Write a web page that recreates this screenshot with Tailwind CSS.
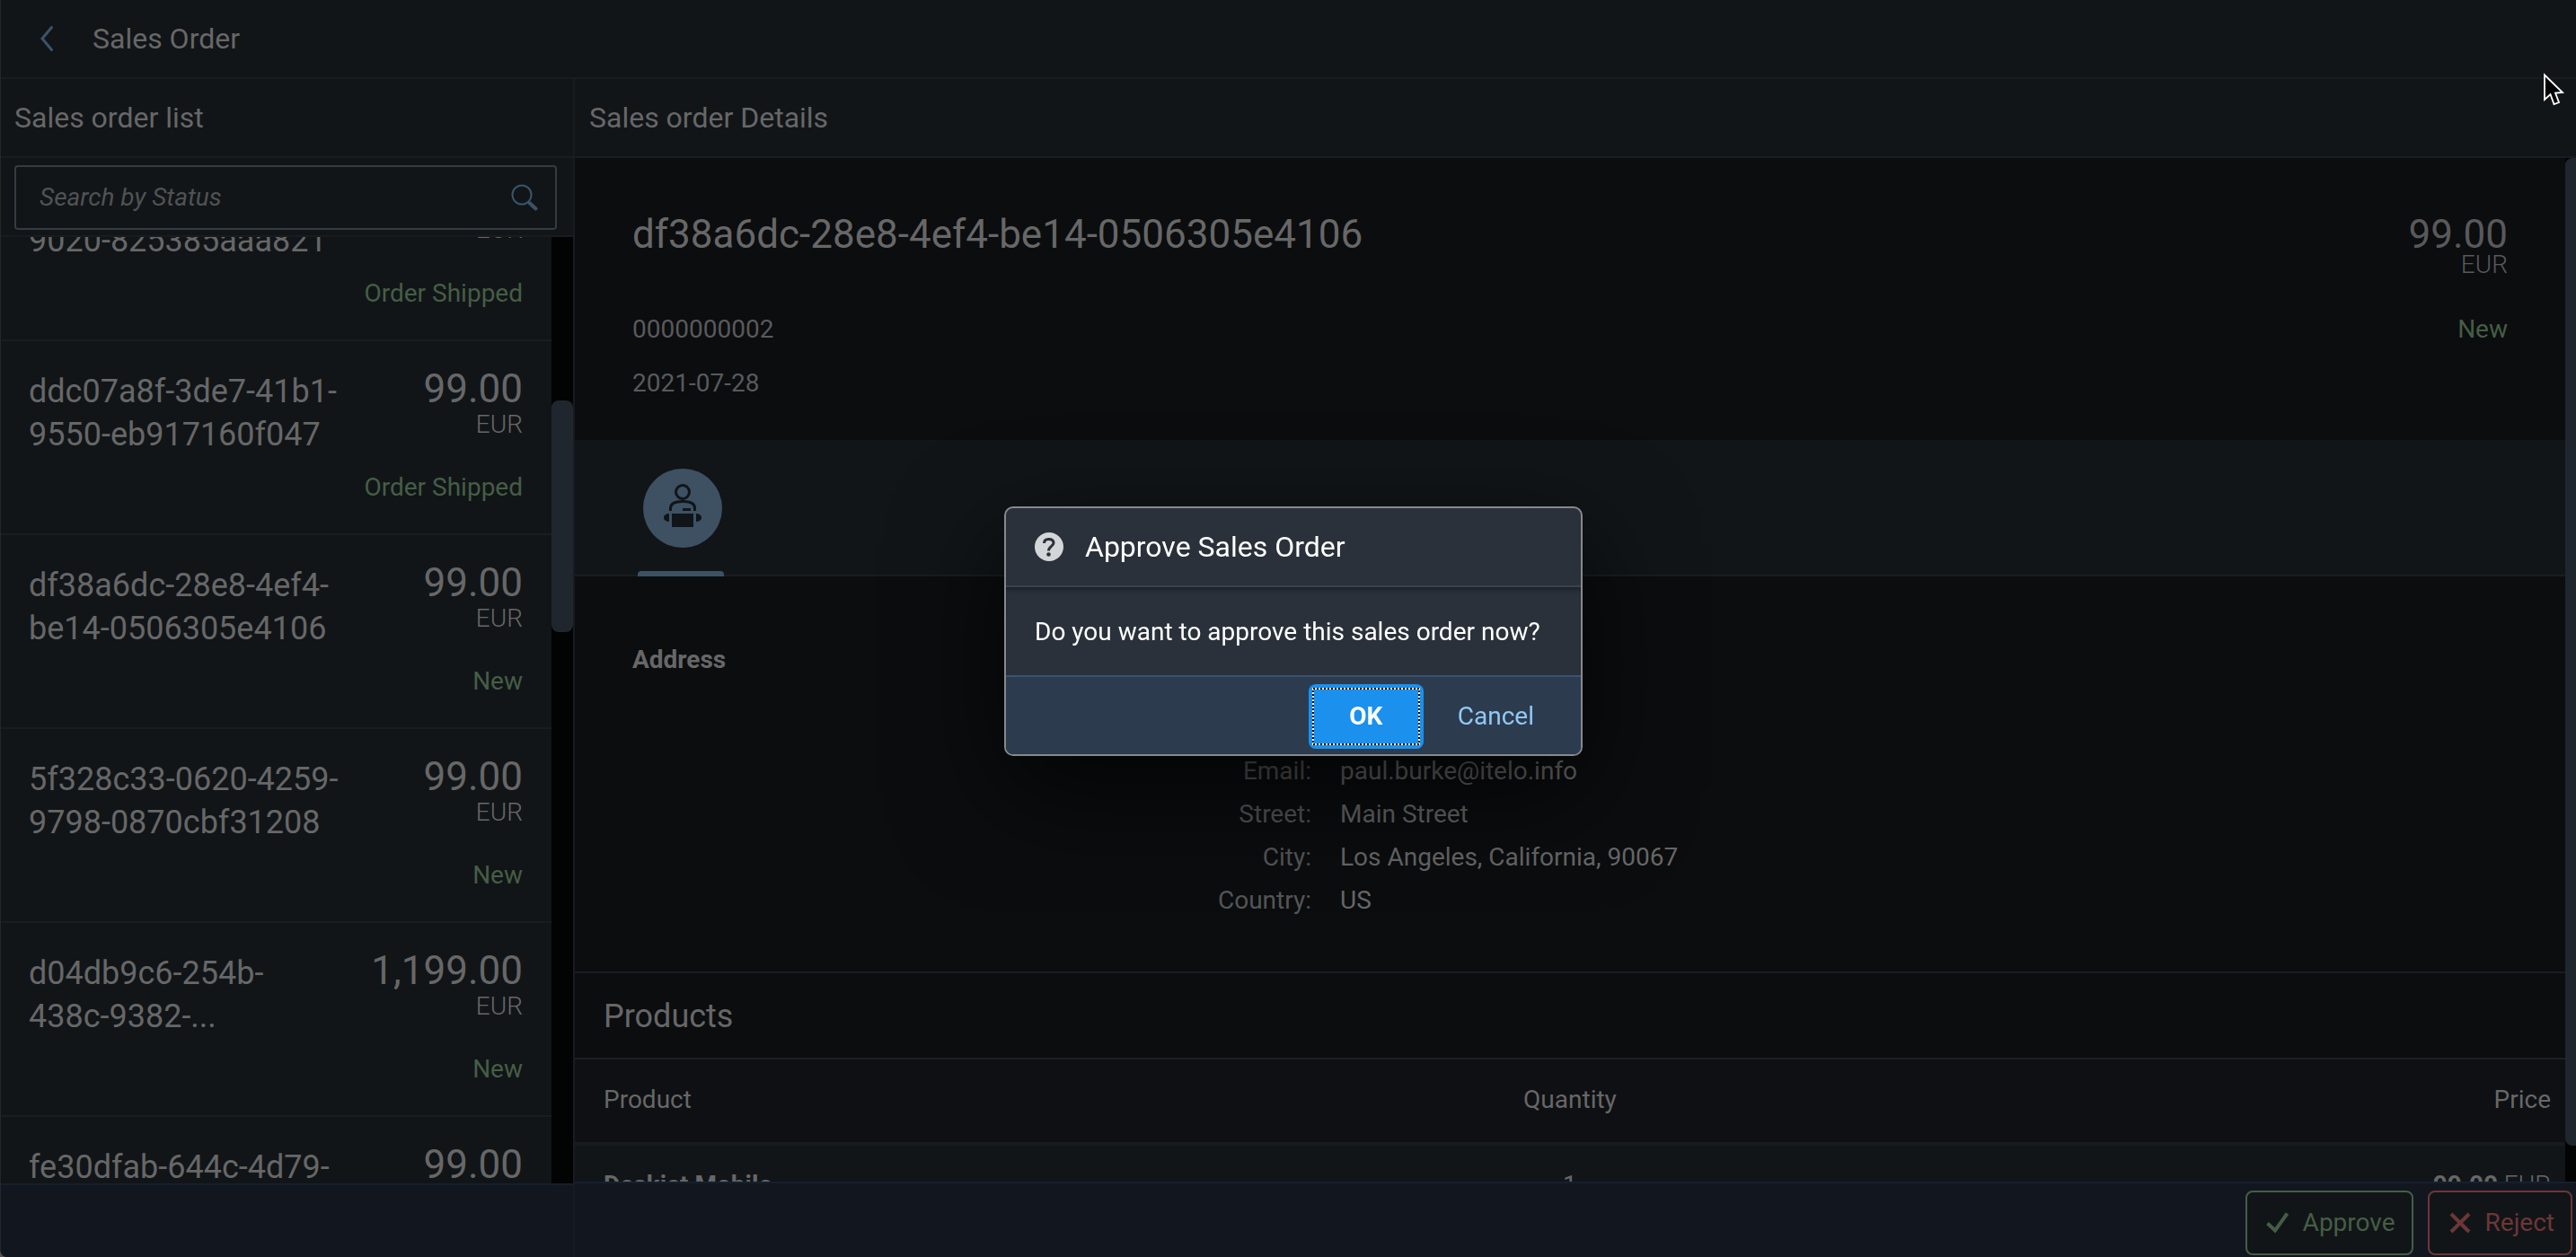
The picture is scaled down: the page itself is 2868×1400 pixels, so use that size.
<!DOCTYPE html>
<html lang="en">
<head>
<meta charset="utf-8">
<title>Sales Order</title>
<script src="https://cdn.jsdelivr.net/npm/@tailwindcss/browser@4"></script>
</head>
<body class="h-screen overflow-hidden bg-[#55524e] font-[Roboto,sans-serif] text-[28px] leading-9 text-[#676767]">
<div class="flex h-full flex-col overflow-hidden rounded-bl-lg border-l border-[#23272a] bg-[#111518]">

  <!-- Application header -->
  <header class="flex h-22 shrink-0 items-center border-b-2 border-[#181c21] pl-[34px]">
    <button type="button" aria-label="Back" class="flex h-8 w-8 items-center justify-center text-[#3b5368]">
      <svg class="h-8 w-8" viewBox="0 0 32 32" fill="none" stroke="currentColor" stroke-width="3" stroke-linecap="round"><path d="M22.5 3.500 L12 16 L22.500 28.500"/></svg>
    </button>
    <h1 class="ml-9 text-[32px]">Sales Order</h1>
  </header>

  <div class="flex min-h-0 flex-1">

    <!-- Master list -->
    <aside class="flex w-[639px] shrink-0 flex-col border-r-2 border-[#181b21]">
      <h2 class="flex h-22 shrink-0 items-center border-b-2 border-[#181c24] pl-[15px] text-[32px]">Sales order list</h2>
      <div class="shrink-0 border-b-2 border-[#181c21] pt-2 pr-[18px] pb-1.5 pl-[15px]">
        <div class="flex h-18 items-center rounded border-2 border-[#343b43] pr-[18px] pl-[26px]">
          <input type="search" aria-label="Search by Status" placeholder="Search by Status" class="min-w-0 flex-1 bg-transparent italic outline-none placeholder:text-[#505253]">
          <button type="button" aria-label="Search" class="text-[#3b5368]">
            <svg class="h-8 w-8" viewBox="0 0 32 32" fill="none" stroke="currentColor" stroke-linecap="round"><circle cx="13" cy="13" r="10.500" stroke-width="2"/><path d="M21.500 22 L28.500 28.500" stroke-width="4"/></svg>
          </button>
        </div>
      </div>
      <div class="flex min-h-0 flex-1 overflow-hidden">
        <ul class="-mt-[100px] min-w-0 flex-1">
          <li class="border-b-2 border-[#191d20] pt-8 pr-8 pb-[33px] pl-[31px]">
            <div class="flex h-24 items-end justify-between">
              <p class="text-4xl leading-[48px]">9020-825385aaa821</p>
              <p class="mb-[18px] font-light">EUR</p>
            </div>
            <p class="mt-[17px] text-right text-[#465d45]">Order Shipped</p>
          </li>
          <li class="border-b-2 border-[#191d20] pt-8 pr-8 pb-[33px] pl-[31px]">
            <div class="flex h-24 justify-between">
              <p class="text-4xl leading-[48px]">ddc07a8f-3de7-41b1-<br>9550-eb917160f047</p>
              <p class="text-right leading-[38px] font-light"><span class="block text-[44px] leading-[42px] font-normal">99.00</span>EUR</p>
            </div>
            <p class="mt-[17px] text-right text-[#465d45]">Order Shipped</p>
          </li>
          <li class="border-b-2 border-[#191d20] pt-8 pr-8 pb-[33px] pl-[31px]">
            <div class="flex h-24 justify-between">
              <p class="text-4xl leading-[48px]">df38a6dc-28e8-4ef4-<br>be14-0506305e4106</p>
              <p class="text-right leading-[38px] font-light"><span class="block text-[44px] leading-[42px] font-normal">99.00</span>EUR</p>
            </div>
            <p class="mt-[17px] text-right text-[#465d45]">New</p>
          </li>
          <li class="border-b-2 border-[#191d20] pt-8 pr-8 pb-[33px] pl-[31px]">
            <div class="flex h-24 justify-between">
              <p class="text-4xl leading-[48px]">5f328c33-0620-4259-<br>9798-0870cbf31208</p>
              <p class="text-right leading-[38px] font-light"><span class="block text-[44px] leading-[42px] font-normal">99.00</span>EUR</p>
            </div>
            <p class="mt-[17px] text-right text-[#465d45]">New</p>
          </li>
          <li class="border-b-2 border-[#191d20] pt-8 pr-8 pb-[33px] pl-[31px]">
            <div class="flex h-24 justify-between">
              <p class="text-4xl leading-[48px]">d04db9c6-254b-<br>438c-9382-...</p>
              <p class="text-right leading-[38px] font-light"><span class="block text-[44px] leading-[42px] font-normal">1,199.00</span>EUR</p>
            </div>
            <p class="mt-[17px] text-right text-[#465d45]">New</p>
          </li>
          <li class="pt-8 pr-8 pl-[31px]">
            <div class="flex justify-between">
              <p class="text-4xl leading-[48px]">fe30dfab-644c-4d79-</p>
              <p class="text-right text-[44px] leading-[42px]">99.00</p>
            </div>
          </li>
        </ul>
        <div class="w-6 shrink-0 bg-[#020303] pt-[182px]"><div class="h-[258px] rounded-lg bg-[#1f262e]"></div></div>
      </div>
      <div class="h-[82px] shrink-0 border-t-2 border-[#15202d] bg-[#12171f]"></div>
    </aside>

    <!-- Detail page -->
    <main class="flex min-w-0 flex-1 flex-col">
      <h2 class="flex h-22 shrink-0 items-center border-b-2 border-[#181c24] pl-4 text-[32px]">Sales order Details</h2>
      <div class="flex min-h-0 flex-1 overflow-hidden">
        <div class="min-w-0 flex-1 bg-[#0b0d0f]">
          <section class="px-16 pt-16 pb-[33px]">
            <div class="flex h-[66px] justify-between">
              <h3 class="text-[44px] leading-[42px]">df38a6dc-28e8-4ef4-be14-0506305e4106</h3>
              <p class="text-right leading-[26px] font-light text-[#59595a]"><span class="block text-[44px] leading-[42px] font-normal">99.00</span>EUR</p>
            </div>
            <div class="mt-[31px] flex justify-between leading-[60px] text-[#595a5b]">
              <p>0000000002<br>2021-07-28</p>
              <p class="text-[#465d45]">New</p>
            </div>
          </section>

          <div role="tablist" class="flex h-[152px] items-end border-b-2 border-[#191d22] bg-[#111518] pl-[70px]">
            <button type="button" role="tab" aria-selected="true" aria-label="Customer" class="-mb-0.5 flex w-24 flex-col items-center">
              <svg class="ml-1 h-22 w-22" viewBox="716 522 88 88"><circle cx="760" cy="566" r="44" fill="#3d5163"/><g fill="none" stroke="#111518" stroke-width="3"><circle cx="760" cy="548" r="7.500"/><path d="M746.500 569 V566 C746.500 561 750.500 558.500 760 558.500 C769.500 558.500 773.500 561 773.500 566 V569"/></g><g fill="#111518"><path d="M760 566 H769 V569 H760 Z M748 572 H772 V587 H748 Z M745 572 V581 C737 581 737 572 745 572 Z M775 572 V581 C783 581 783 572 775 572 Z"/></g></svg>
              <span class="mt-[26px] h-1.5 w-full rounded-t bg-[#3d5163]"></span>
            </button>
          </div>

          <section class="h-[442px] border-b-2 border-[#191d23] px-16 pt-[75px]">
            <h4 class="font-bold">Address</h4>
            <dl class="mt-[82px] grid grid-cols-[7fr_12fr] gap-x-8 pr-1 leading-[48px]">
              <dt class="text-right text-[#555657]">Email:</dt><dd>paul.burke@itelo.info</dd>
              <dt class="text-right text-[#555657]">Street:</dt><dd>Main Street</dd>
              <dt class="text-right text-[#555657]">City:</dt><dd>Los Angeles, California, 90067</dd>
              <dt class="text-right text-[#555657]">Country:</dt><dd>US</dd>
            </dl>
          </section>

          <section>
            <h3 id="products" class="flex h-24 items-center border-b-2 border-[#1b2026] pt-0.5 pl-8 text-4xl">Products</h3>
            <table aria-labelledby="products" class="w-full table-fixed">
              <thead class="bg-[#0e1013]">
                <tr class="h-[94px] border-b-4 border-[#171b20]">
                  <th scope="col" class="pb-0.5 pl-8 text-left font-normal">Product</th>
                  <th scope="col" class="pb-0.5 text-center font-normal">Quantity</th>
                  <th scope="col" class="pr-4 pb-0.5 text-right font-normal">Price</th>
                </tr>
              </thead>
              <tbody class="bg-[#111518]">
                <tr class="align-top">
                  <td class="pt-[26px] pb-8 pl-8 font-bold">Deskjet Mobile</td>
                  <td class="pt-[26px] pb-8 text-center">1</td>
                  <td class="pt-[26px] pr-4 pb-8 text-right font-light"><b class="font-bold">99.00</b> EUR</td>
                </tr>
              </tbody>
            </table>
          </section>
        </div>
        <div class="w-3 shrink-0 bg-[#020303]"><div class="h-[1100px] rounded-l-lg bg-[#1f262e]"></div></div>
      </div>

      <footer class="flex h-[84px] shrink-0 items-center justify-end gap-4 border-t-2 border-[#16202d] bg-[#12171f] pt-1.5 pr-1">
        <button type="button" class="flex h-18 items-center gap-3.5 rounded-lg border-2 border-[#465d45] bg-[#111518] pr-[18px] pl-5 text-[#465d45]">
          <svg class="h-7 w-7" viewBox="0 0 28 28" fill="none" stroke="currentColor" stroke-width="4"><path d="M2.500 14.500 L11 22.500 L24.500 3.500"/></svg>Approve
        </button>
        <button type="button" class="flex h-18 items-center gap-3.5 rounded-lg border-2 border-[#6c3736] bg-[#111518] pr-[18px] pl-5 text-[#6c3736]">
          <svg class="h-7 w-7" viewBox="0 0 28 28" fill="none" stroke="currentColor" stroke-width="4"><path d="M4 4 L24 24 M24 4 L4 24"/></svg>Reject
        </button>
      </footer>
    </main>
  </div>
</div>

<!-- Confirmation dialog -->
<div class="fixed inset-0 flex items-center justify-center pt-1.5 pl-3">
  <div role="dialog" aria-modal="true" aria-labelledby="dlg-title" class="w-[644px] overflow-hidden rounded-[10px] border-2 border-[#87898a] bg-[#2a313a] text-white shadow-[0_40px_120px_rgba(0,0,0,0.7)]">
    <div class="flex h-22 items-center gap-6 border-b-2 border-[#3a444f] pl-8">
      <svg class="h-8 w-8" viewBox="0 0 32 32"><circle cx="16" cy="16" r="16" fill="#d3d6d9"/><path d="M10.500 12 C10.500 9 12.500 7.500 15.500 7.500 C19 7.500 21 9.200 21 11.800 C21 15.500 15.500 15.500 15.500 20.500" fill="none" stroke="#2a313a" stroke-width="3"/><circle cx="15.500" cy="24.500" r="2.300" fill="#2a313a"/></svg>
      <h2 id="dlg-title" class="text-[32px]">Approve Sales Order</h2>
    </div>
    <p class="flex h-[98px] items-center pt-0.5 pl-8 shadow-[inset_0_6px_6px_-4px_rgba(0,0,0,0.4)]">Do you want to approve this sales order now?</p>
    <div class="flex h-22 items-center justify-end gap-2 border-t-2 border-[#3b5270] bg-[#2c3c4e] pt-0.5 pr-[22px]">
      <button type="button" class="relative h-18 w-32 rounded-lg bg-[#1b90ed] font-bold">OK
        <svg class="absolute inset-1 h-16 w-30" fill="none" stroke-width="2"><rect x="1" y="1" width="118" height="62" stroke="#fff"/><rect x="1" y="1" width="118" height="62" stroke="#000" stroke-dasharray="2 2"/></svg>
      </button>
      <button type="button" class="h-18 px-[30px] text-[#91c8f6]">Cancel</button>
    </div>
  </div>
</div>

<!-- Mouse pointer -->
<svg class="pointer-events-none fixed top-20 right-3 h-10 w-6" viewBox="0 0 24 40"><path d="M1 3.500 L1 31 L7.500 25 L11.500 36 L17 34 L13 23.500 L21 23 Z" fill="#000" stroke="#fff" stroke-width="1.800"/></svg>
</body>
</html>
